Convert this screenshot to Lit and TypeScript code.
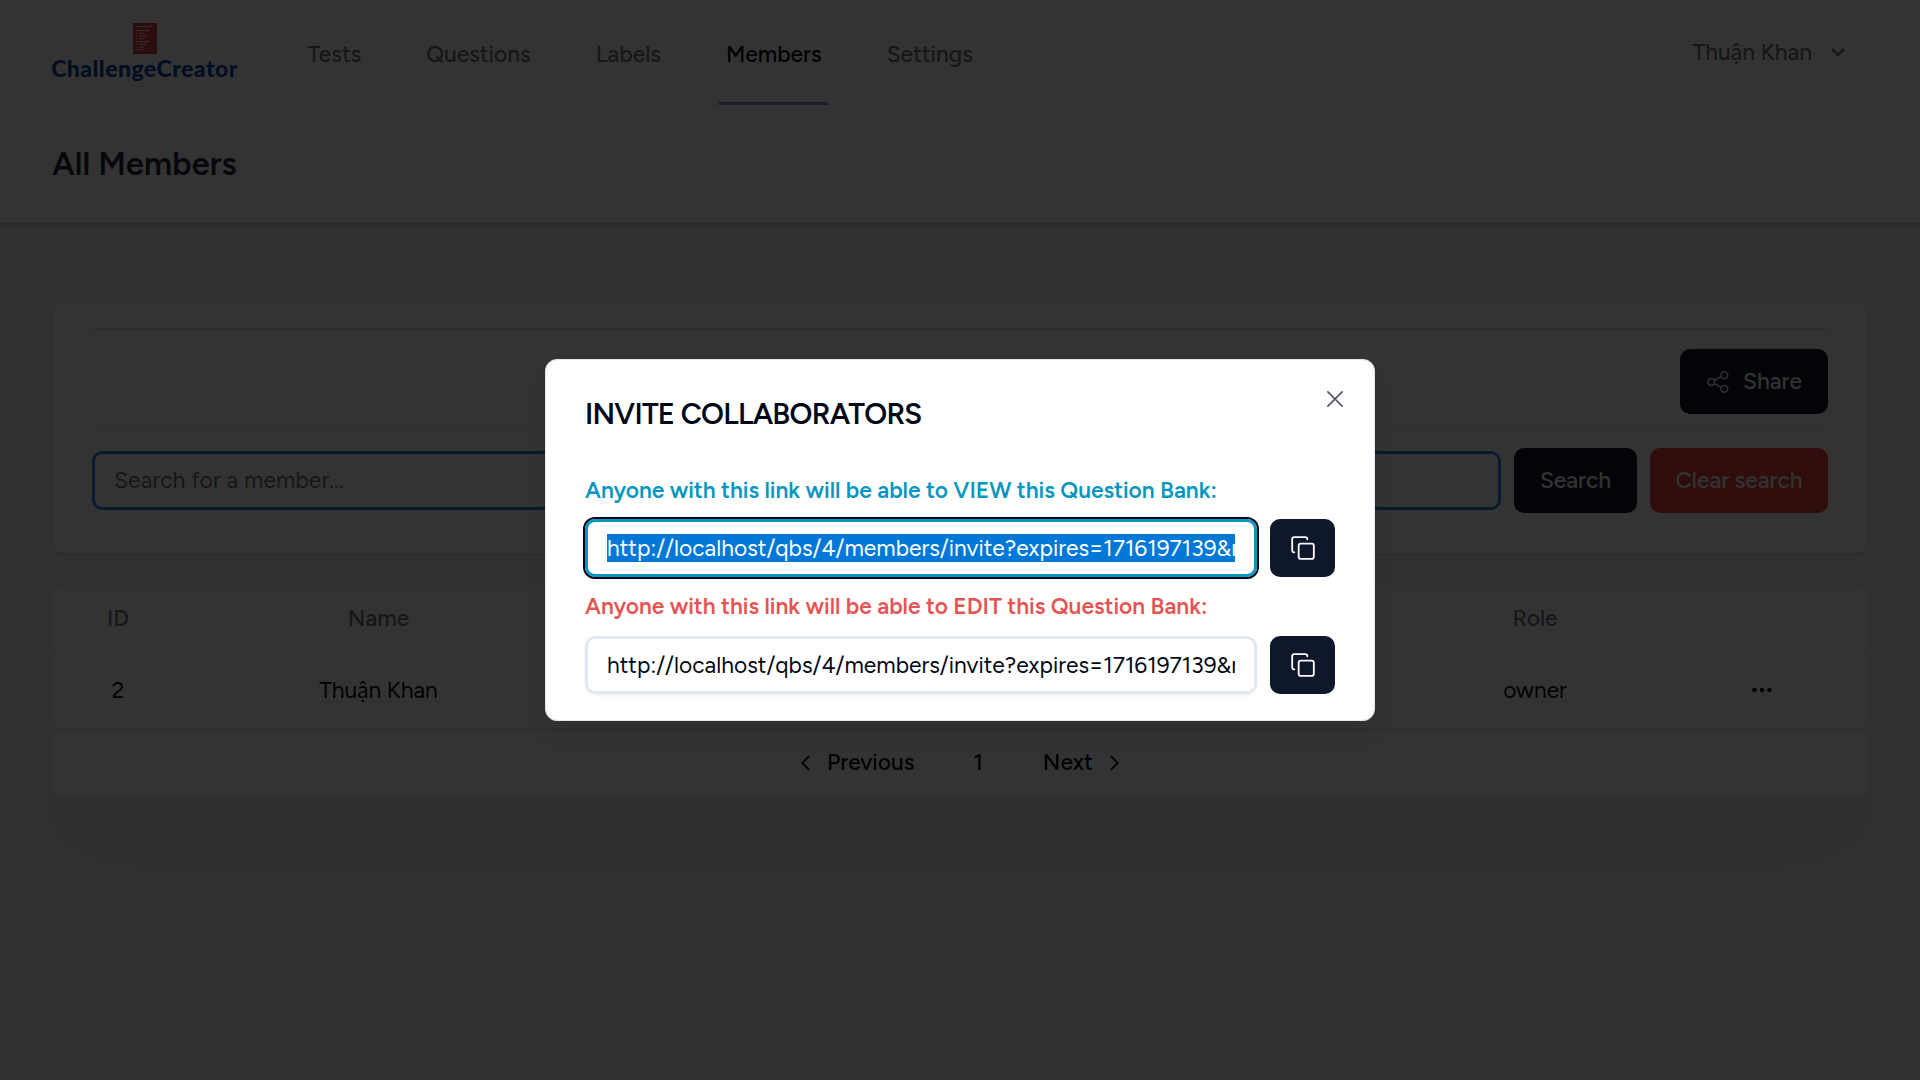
import { LitElement, html, css, svg } from "lit";
import { customElement } from "lit/decorators.js";

const logoLines = [
  [3, 3, 17], [3, 7, 14], [6, 9.6, 5], [6, 12.4, 7.5], [6, 15.2, 6],
  [3, 18, 14], [6, 20.8, 7.5], [6, 23.6, 5], [6, 26.2, 6],
];

const copyIcon = html`<svg class="copy-icon" viewBox="0 0 24 24"><rect x="8" y="8" width="14" height="14" rx="2"/><path d="M4 16c-1.100 0-2-.9-2-2V4c0-1.100.9-2 2-2h10c1.100 0 2 .9 2 2"/></svg>`;

const link = "http://localhost/qbs/4/members/invite?expires=1716197139&r";

@customElement("app-root")
class AppRoot extends LitElement {
  static styles = css`
    :host {
      display: block; position: relative; width: 1920px; height: 1080px; overflow: hidden;
      background: #f3f4f6; color: #020817; white-space: nowrap;
      font-family: Figtree, Lato, "Liberation Sans", sans-serif; font-size: 22.75px; line-height: 32px;
    }
    * { box-sizing: border-box; }
    svg { display: block; flex: none; }
    .nav { height: 105px; background: #fff; border-bottom: 1px solid #f3f4f6; display: flex; align-items: flex-start; padding: 0 75px 0 51px; color: #6b7280; }
    .brand { width: 187px; padding-top: 23px; display: flex; flex-direction: column; align-items: center; }
    .brand-name { font-family: Lato, sans-serif; font-weight: 900; font-size: 23px; letter-spacing: .45px; line-height: 28px; color: #0c44ac; }
    .links { display: flex; margin-left: 63px; height: 105px; gap: 52px; font-weight: 500; }
    .link { padding: 38px 6.5px 0; border-bottom: 3px solid transparent; height: 105px; }
    .link.active { color: #020817; border-color: #818cf8; }
    .user { margin-left: auto; display: flex; align-items: flex-start; padding-top: 36px; gap: 19px; font-weight: 500; }
    .user svg { margin-top: 12px; }
    .header { height: 118px; background: #fff; box-shadow: 0 2px 5px rgba(0,0,0,.1), 0 2px 3px -1px rgba(0,0,0,.1); padding: 37px 52px 0; }
    .h1 { font-size: 32.5px; line-height: 44px; font-weight: 600; letter-spacing: .1px; color: #1f2937; }
    .panel { margin: 79px 53px 0; height: 251px; background: #fff; border-radius: 10px; padding: 26px 39px 0; box-shadow: 0 2px 3px rgba(0,0,0,.1); }
    .rule { height: 2px; background: #e5e7eb; }
    .share-row { display: flex; justify-content: flex-end; height: 98px; padding-top: 19px; border-bottom: 1px solid #e5e7eb; }
    .btn { height: 65px; border-radius: 10px; background: #0f172a; color: #f8fafc; display: flex; align-items: center; justify-content: center; font-weight: 500; }
    .btn span { padding-bottom: 2px; }
    .share { width: 148px; gap: 14px; padding-left: 1px; }
    .search-row { display: flex; align-items: center; padding-top: 20px; gap: 13px; }
    .field { border: 3px solid #3b82f6; border-radius: 10px; height: 59px; flex: 1; display: flex; align-items: center; padding: 0 0 2px 19px; color: #64748b; letter-spacing: .12px; }
    .search { width: 123px; }
    .clear { width: 178px; background: #ef4444; }
    .table { margin: 32px 52px 0; height: 144px; background: #fff; border: 1px solid #eceef2; border-radius: 10px; }
    .row { display: grid; grid-template-columns: 130px 391px 840px 242px 1fr; justify-items: center; align-items: center; }
    .head { height: 65px; border-bottom: 1px solid #e2e8f0; color: #64748b; font-weight: 500; }
    .body { height: 78px; }
    .pager { margin: 1px 52px 0; height: 65px; background: #fff; border-radius: 8px; display: flex; align-items: center; padding-left: 749px; box-shadow: 0 41px 81px -20px rgba(0,0,0,.17); font-weight: 500; }
    .pager span { padding-bottom: 2px; }
    .gap-a { margin-left: 17px; } .gap-b { margin-left: 59px; } .gap-c { margin-left: 60px; } .gap-d { margin-left: 17px; }
    .overlay { position: absolute; inset: 0; background: rgba(0,0,0,.8); display: flex; align-items: flex-start; justify-content: center; padding-top: 359px; }
    .dialog { position: relative; width: 830px; height: 362px; background: #fff; border: 1px solid #e2e8f0; border-radius: 12px; padding: 34px 39px 0; box-shadow: 0 16px 24px -5px rgba(0,0,0,.1); }
    .title { font-size: 29.25px; line-height: 40px; font-weight: 600; letter-spacing: -.026em; }
    .close { position: absolute; left: 781px; top: 31px; }
    .label { font-weight: 600; letter-spacing: -.025px; }
    .view { color: #0696c2; margin-top: 40px; }
    .edit { color: #e55353; margin-top: 13px; }
    .link-row { display: flex; gap: 13px; height: 58px; margin-top: 13px; }
    .edit + .link-row { margin-top: 14px; }
    .url { width: 672px; border: 3px solid #e2e8f0; border-radius: 10px; padding: 0 19px; display: flex; align-items: center; box-shadow: 0 2px 3px rgba(0,0,0,.05); }
    .url.focus { border-color: #0696c2; box-shadow: 0 0 0 2px #020817; }
    .value { width: 628px; height: 28px; line-height: 29px; overflow: hidden; flex: none; letter-spacing: .03px; }
    .focus .value { background: #0078d7; color: #fff; }
    .copy { width: 65px; height: 58px; }
    .copy-icon { width: 26px; height: 26px; fill: none; stroke: #f8fafc; stroke-width: 1.7; stroke-linecap: round; stroke-linejoin: round; }
  `;

  render() {
    return html`
      <div class="nav">
        <div class="brand">
          <svg width="24" height="31" viewBox="0 0 24 31">
            <rect width="24" height="31" fill="#e03c44"/>
            ${logoLines.map(([x, y, w]) => svg`<rect x=${x} y=${y} width=${w} height="1.200" fill="#f3d6d8"/>${x > 3 ? svg`<rect x="3" y=${y} width="1.200" height="1.200" fill="#f3d6d8"/>` : ""}`)}
          </svg>
          <div class="brand-name">ChallengeCreator</div>
        </div>
        <div class="links">
          <div class="link">Tests</div>
          <div class="link">Questions</div>
          <div class="link">Labels</div>
          <div class="link active">Members</div>
          <div class="link">Settings</div>
        </div>
        <div class="user">Thuận Khan
          <svg width="14" height="9" viewBox="0 0 14 9" fill="none" stroke="#6b7280" stroke-width="2.600"><path d="M1 1l6 6 6-6"/></svg>
        </div>
      </div>
      <div class="header"><div class="h1">All Members</div></div>
      <div class="panel">
        <div class="rule"></div>
        <div class="share-row">
          <div class="btn share">
            <svg width="22" height="22" viewBox="0 0 22 22" fill="none" stroke="#f8fafc" stroke-width="1.500"><circle cx="4.300" cy="11" r="3.400"/><circle cx="17.300" cy="4.200" r="3.400"/><circle cx="17.300" cy="17.800" r="3.400"/><path d="M7.300 9.400l7-3.700M7.300 12.600l7 3.700"/></svg>
            <span>Share</span>
          </div>
        </div>
        <div class="search-row">
          <div class="field">Search for a member...</div>
          <div class="btn search"><span>Search</span></div>
          <div class="btn clear"><span>Clear search</span></div>
        </div>
      </div>
      <div class="table">
        <div class="row head"><span>ID</span><span>Name</span><span></span><span>Role</span><span></span></div>
        <div class="row body"><span>2</span><span>Thuận Khan</span><span></span><span>owner</span>
          <svg width="20" height="6" viewBox="0 0 20 6" fill="#020817"><circle cx="2.500" cy="3" r="2.300"/><circle cx="10" cy="3" r="2.300"/><circle cx="17.500" cy="3" r="2.300"/></svg>
        </div>
      </div>
      <div class="pager">
        <svg width="9" height="16" viewBox="0 0 9 16" fill="none" stroke="#020817" stroke-width="1.800"><path d="M8.300.8L1.200 8l7.100 7.200"/></svg>
        <span class="gap-a">Previous</span>
        <span class="gap-b">1</span>
        <span class="gap-c">Next</span>
        <svg class="gap-d" width="9" height="16" viewBox="0 0 9 16" fill="none" stroke="#020817" stroke-width="1.800"><path d="M.7.8L7.800 8 .7 15.200"/></svg>
      </div>
      <div class="overlay">
        <div class="dialog">
          <div class="title">INVITE COLLABORATORS</div>
          <svg class="close" width="16" height="16" viewBox="0 0 16 16" fill="none" stroke="#535763" stroke-width="1.700" stroke-linecap="round"><path d="M.9.9l14.200 14.200M15.100.9L.9 15.100"/></svg>
          <div class="label view">Anyone with this link will be able to VIEW this Question Bank:</div>
          <div class="link-row">
            <div class="url focus"><div class="value">${link}</div></div>
            <div class="btn copy">${copyIcon}</div>
          </div>
          <div class="label edit">Anyone with this link will be able to EDIT this Question Bank:</div>
          <div class="link-row">
            <div class="url"><div class="value">${link}</div></div>
            <div class="btn copy">${copyIcon}</div>
          </div>
        </div>
      </div>
    `;
  }
}
